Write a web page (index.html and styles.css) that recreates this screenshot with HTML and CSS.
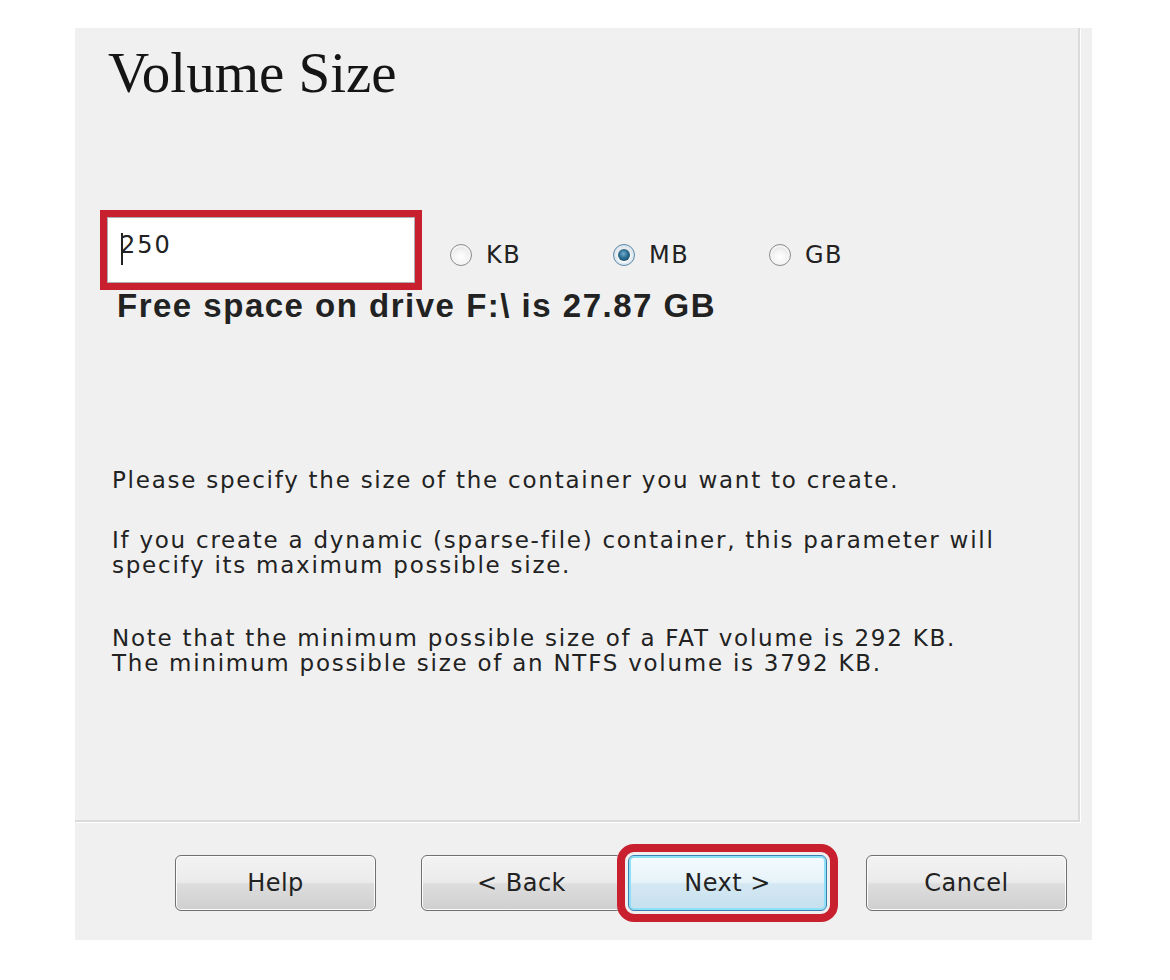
FILE: index.html
```html
<!DOCTYPE html>
<html>
<head>
<meta charset="utf-8">
<link rel="stylesheet" href="styles.css">
<title>Volume Size</title>
</head>
<body>
<div class="dialog">
  <div class="content">
    <h1 class="title">Volume Size</h1>
    <div class="size-row">
      <div class="size-input highlight"><span class="caret"></span>250</div>
      <div class="radios">
        <label class="radio"><span class="dot"></span>KB</label>
        <label class="radio"><span class="dot checked"></span>MB</label>
        <label class="radio"><span class="dot"></span>GB</label>
      </div>
    </div>
    <div class="free">Free space on drive F:\ is 27.87 GB</div>
    <p class="para p1">Please specify the size of the container you want to create.</p>
    <p class="para p2">If you create a dynamic (sparse-file) container, this parameter will<br>specify its maximum possible size.</p>
    <p class="para p3">Note that the minimum possible size of a FAT volume is 292 KB.<br>The minimum possible size of an NTFS volume is 3792 KB.</p>
  </div>
  <div class="buttons">
    <button class="btn help">Help</button>
    <button class="btn back">&lt; Back</button>
    <button class="btn next highlight">Next &gt;</button>
    <button class="btn cancel">Cancel</button>
  </div>
</div>
</body>
</html>
```

FILE: styles.css
```css
html, body {
  margin: 0;
  padding: 0;
  background: #ffffff;
}

.dialog {
  margin: 28px 0 0 75px;
  width: 1017px;
  height: 912px;
  background: #f0f0f0;
  display: flex;
  flex-direction: column;
}

.content {
  height: 792px;
  margin-right: 12px;
  border-right: 2px solid #dadada;
  border-bottom: 2px solid #dadada;
  box-shadow: 1px 1px 0 #ffffff;
  padding-left: 25px;
  box-sizing: content-box;
  overflow: hidden;
}

.title {
  margin: 16px 0 0 8px;
  font-family: "Liberation Serif", "Times New Roman", serif;
  font-weight: normal;
  font-size: 57px;
  line-height: 57px;
  color: #151515;
}

.size-row {
  margin-top: 116px;
  display: flex;
  align-items: flex-start;
}

.size-input {
  width: 308px;
  height: 66px;
  background: #ffffff;
  border: 1px solid #abadb3;
  box-sizing: border-box;
  margin: 0 0 0 7px;
  padding: 13px 0 0 13px;
  display: flex;
  align-items: flex-start;
  font-family: "DejaVu Sans", sans-serif;
  font-size: 24px;
  line-height: 28px;
  letter-spacing: 2px;
  color: #222;
}

.highlight {
  outline: 7px solid #c92030;
  outline-offset: 0;
}

.caret {
  display: inline-block;
  width: 2px;
  height: 32px;
  background: #222;
  margin-right: -3px;
  margin-top: 2px;
}

.radios {
  display: grid;
  grid-template-columns: 163px 156px auto;
  margin: 24px 0 0 35px;
  font-family: "DejaVu Sans", sans-serif;
  font-size: 24px;
  line-height: 28px;
  letter-spacing: 1.5px;
  color: #222;
}

.radio {
  display: flex;
  align-items: center;
  gap: 14px;
}

.dot {
  width: 22px;
  height: 22px;
  border-radius: 50%;
  box-sizing: border-box;
  border: 1px solid #8d8d8d;
  background: radial-gradient(circle at 50% 60%, #ffffff 0%, #f4f4f4 40%, #d4d4d4 100%);
  box-shadow: inset 0 0 0 2px #f6f6f6;
  position: relative;
}

.dot.checked {
  border-color: #5a87a6;
  box-shadow: inset 0 0 0 2px #dbe9f3;
}

.dot.checked::after {
  content: "";
  position: absolute;
  left: 4px;
  top: 4px;
  width: 12px;
  height: 12px;
  border-radius: 50%;
  background: radial-gradient(circle at 45% 40%, #6fb0d0 0%, #2a6b8f 45%, #15405c 100%);
}

.free {
  margin: 5px 0 0 17px;
  font-family: "Liberation Sans", Arial, sans-serif;
  font-weight: bold;
  font-size: 33px;
  line-height: 36px;
  color: #222;
  letter-spacing: 1.5px;
}

.para {
  margin: 0 0 0 12px;
  font-family: "DejaVu Sans", sans-serif;
  font-size: 23px;
  letter-spacing: 1.75px;
  line-height: 25px;
  color: #222;
}

.p1 { margin-top: 144px; }
.p2 { margin-top: 35px; }
.p3 { margin-top: 48px; }

.buttons {
  display: flex;
  align-items: flex-start;
  padding: 33px 0 0 100px;
}

.btn {
  width: 201px;
  height: 56px;
  border: 1px solid #707070;
  border-radius: 6px;
  background: linear-gradient(to bottom, #f3f3f3 0%, #ebebeb 48%, #dddddd 52%, #cfcfcf 100%);
  box-shadow: inset 0 0 0 1px #fcfcfc;
  font-family: "DejaVu Sans", sans-serif;
  font-size: 24px;
  letter-spacing: 0.5px;
  color: #222;
  padding: 0;
}

.back { margin-left: 45px; }
.next {
  margin-left: 6px;
  width: 199px;
  border-color: #3c7fb1;
  background: linear-gradient(to bottom, #f4fbfe 0%, #e6f3f9 48%, #d4e8f2 52%, #c6e0ee 100%);
  box-shadow: inset 0 0 0 2px #8ee0f7;
  outline-width: 8px;
  outline-offset: 3px;
}
.cancel { margin-left: 39px; }
```
